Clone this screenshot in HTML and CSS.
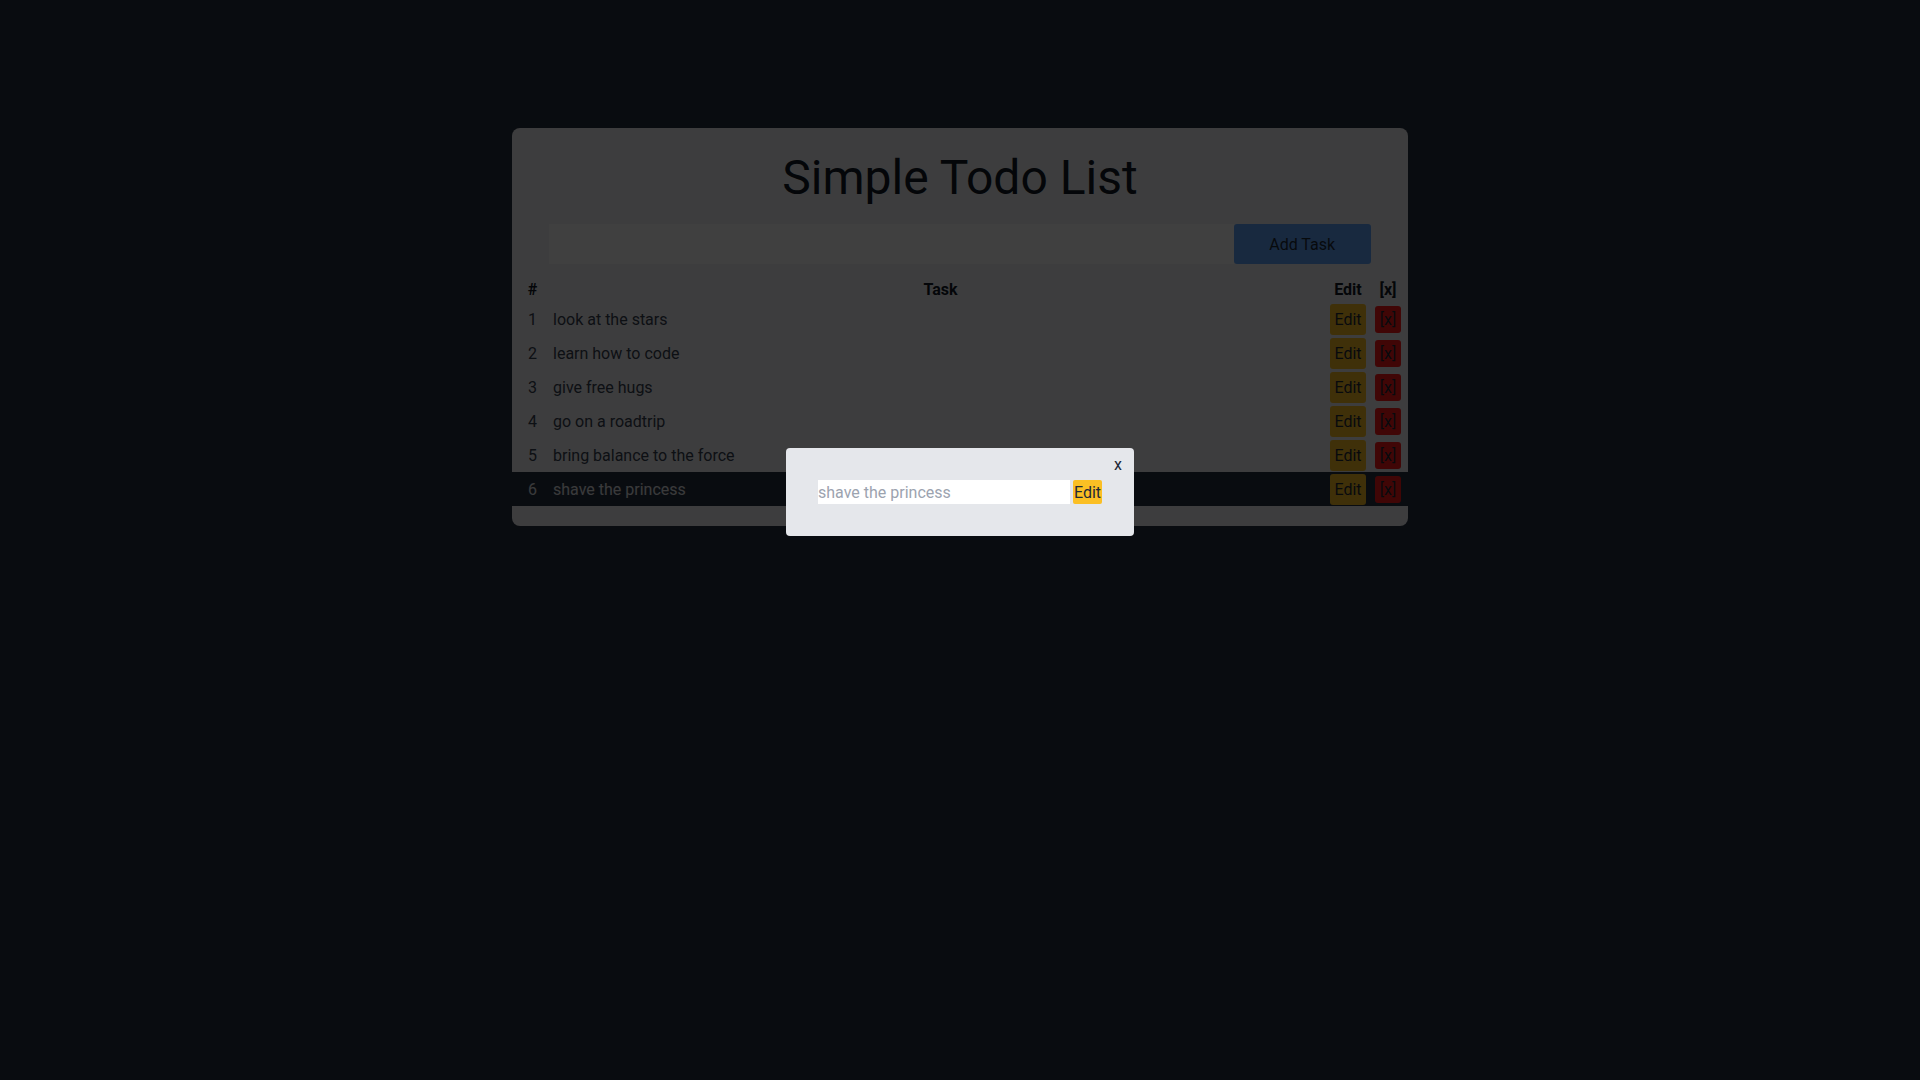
FILE: index.html
```html
<!DOCTYPE html>
<html lang="en">
<head>
<meta charset="utf-8">
<title>Simple Todo List</title>
<link rel="stylesheet" href="styles.css">
</head>
<body>
<main class="card">
  <h1 class="title">Simple Todo List</h1>
  <form class="add-form">
    <input class="add-input" type="text">
    <button class="add-btn" type="button">Add Task</button>
  </form>
  <table class="todo-table">
    <colgroup>
      <col class="col-num"><col class="col-task"><col class="col-edit"><col class="col-del">
    </colgroup>
    <thead>
      <tr class="head-row">
        <th class="cell-num">#</th>
        <th class="cell-task-head">Task</th>
        <th class="cell-btn">Edit</th>
        <th class="cell-btn">[x]</th>
      </tr>
    </thead>
    <tbody>
      <tr class="row">
        <td class="cell-num">1</td><td class="cell-task">look at the stars</td>
        <td class="cell-btn"><button class="edit-btn">Edit</button></td>
        <td class="cell-btn"><button class="del-btn">[x]</button></td>
      </tr>
      <tr class="row">
        <td class="cell-num">2</td><td class="cell-task">learn how to code</td>
        <td class="cell-btn"><button class="edit-btn">Edit</button></td>
        <td class="cell-btn"><button class="del-btn">[x]</button></td>
      </tr>
      <tr class="row">
        <td class="cell-num">3</td><td class="cell-task">give free hugs</td>
        <td class="cell-btn"><button class="edit-btn">Edit</button></td>
        <td class="cell-btn"><button class="del-btn">[x]</button></td>
      </tr>
      <tr class="row">
        <td class="cell-num">4</td><td class="cell-task">go on a roadtrip</td>
        <td class="cell-btn"><button class="edit-btn">Edit</button></td>
        <td class="cell-btn"><button class="del-btn">[x]</button></td>
      </tr>
      <tr class="row">
        <td class="cell-num">5</td><td class="cell-task">bring balance to the force</td>
        <td class="cell-btn"><button class="edit-btn">Edit</button></td>
        <td class="cell-btn"><button class="del-btn">[x]</button></td>
      </tr>
      <tr class="row row-active">
        <td class="cell-num">6</td><td class="cell-task">shave the princess</td>
        <td class="cell-btn"><button class="edit-btn">Edit</button></td>
        <td class="cell-btn"><button class="del-btn">[x]</button></td>
      </tr>
    </tbody>
  </table>
</main>

<div class="overlay">
  <div class="modal">
    <button class="modal-close" type="button">x</button>
    <div class="modal-row">
      <input class="modal-input" type="text" placeholder="shave the princess">
      <button class="modal-edit" type="button">Edit</button>
    </div>
  </div>
</div>
</body>
</html>
```
FILE: styles.css
```css
* { box-sizing: border-box; }

body {
  margin: 0;
  min-height: 100vh;
  background: #273142;
  font-family: Roboto, "Liberation Sans", sans-serif;
  font-size: 16px;
  color: #374151;
}

.card {
  width: 896px;
  margin: 128px auto 0;
  padding: 26px 0 20px;
  background: #f3f4f6;
  border-radius: 8px;
}

.title {
  margin: 0 0 22px;
  font-size: 48px;
  line-height: 48px;
  font-weight: 400;
  text-align: center;
  color: #111827;
}

.add-form {
  display: flex;
  width: 91.6667%;
  height: 40px;
  margin: 0 auto 12px;
}

.add-input {
  flex: 1;
  border: none;
  background: #ffffff;
  font: inherit;
  padding: 0 12px;
  outline: none;
}

.add-btn {
  width: 137px;
  border: none;
  border-radius: 3px;
  background: #60a5fa;
  font: inherit;
  color: #1f2937;
  cursor: pointer;
}

.todo-table {
  width: 100%;
  table-layout: fixed;
  border-collapse: collapse;
}

.col-num { width: 41px; }
.col-edit { width: 40px; }
.col-del { width: 40px; }

.head-row { height: 26px; }
.head-row th {
  font-weight: 700;
  color: #111827;
  padding: 0;
  vertical-align: middle;
}

.row { height: 34px; }
.row td { padding: 0; vertical-align: middle; }

.cell-num { text-align: center; }
.cell-task-head { text-align: center; }
.cell-task { text-align: left; }
.cell-btn { text-align: center; }

.row-active { background: #273142; color: #e5e7eb; }

.edit-btn {
  display: inline-block;
  width: 36px;
  height: 31px;
  padding: 0;
  border: none;
  border-radius: 3px;
  background: #fbbf24;
  font: inherit;
  color: #1f2937;
  vertical-align: middle;
}

.del-btn {
  display: inline-block;
  width: 26px;
  height: 27px;
  padding: 0;
  border: none;
  border-radius: 3px;
  background: #ff1a1a;
  font: inherit;
  color: #1f2937;
  vertical-align: middle;
}

.overlay {
  position: fixed;
  inset: 0;
  background: rgba(0, 0, 0, 0.75);
  display: flex;
  justify-content: center;
  align-items: flex-start;
  padding-top: 448px;
}

.modal {
  position: relative;
  width: 348px;
  height: 88px;
  background: #e5e7eb;
  border-radius: 4px;
  display: flex;
  justify-content: center;
  align-items: center;
}

.modal-close {
  position: absolute;
  top: 7px;
  right: 12px;
  padding: 0;
  border: none;
  background: none;
  font: inherit;
  line-height: 19px;
  color: #1f2937;
}

.modal-row {
  display: flex;
  gap: 3px;
  height: 24px;
}

.modal-input {
  width: 252px;
  border: none;
  background: #ffffff;
  padding: 0;
  font: inherit;
  color: #1f2937;
  outline: none;
}

.modal-input::placeholder { color: #9ca3af; }

.modal-edit {
  width: 29px;
  padding: 0;
  border: none;
  border-radius: 2px;
  background: #fbbf24;
  font: inherit;
  color: #1f2937;
}
```
